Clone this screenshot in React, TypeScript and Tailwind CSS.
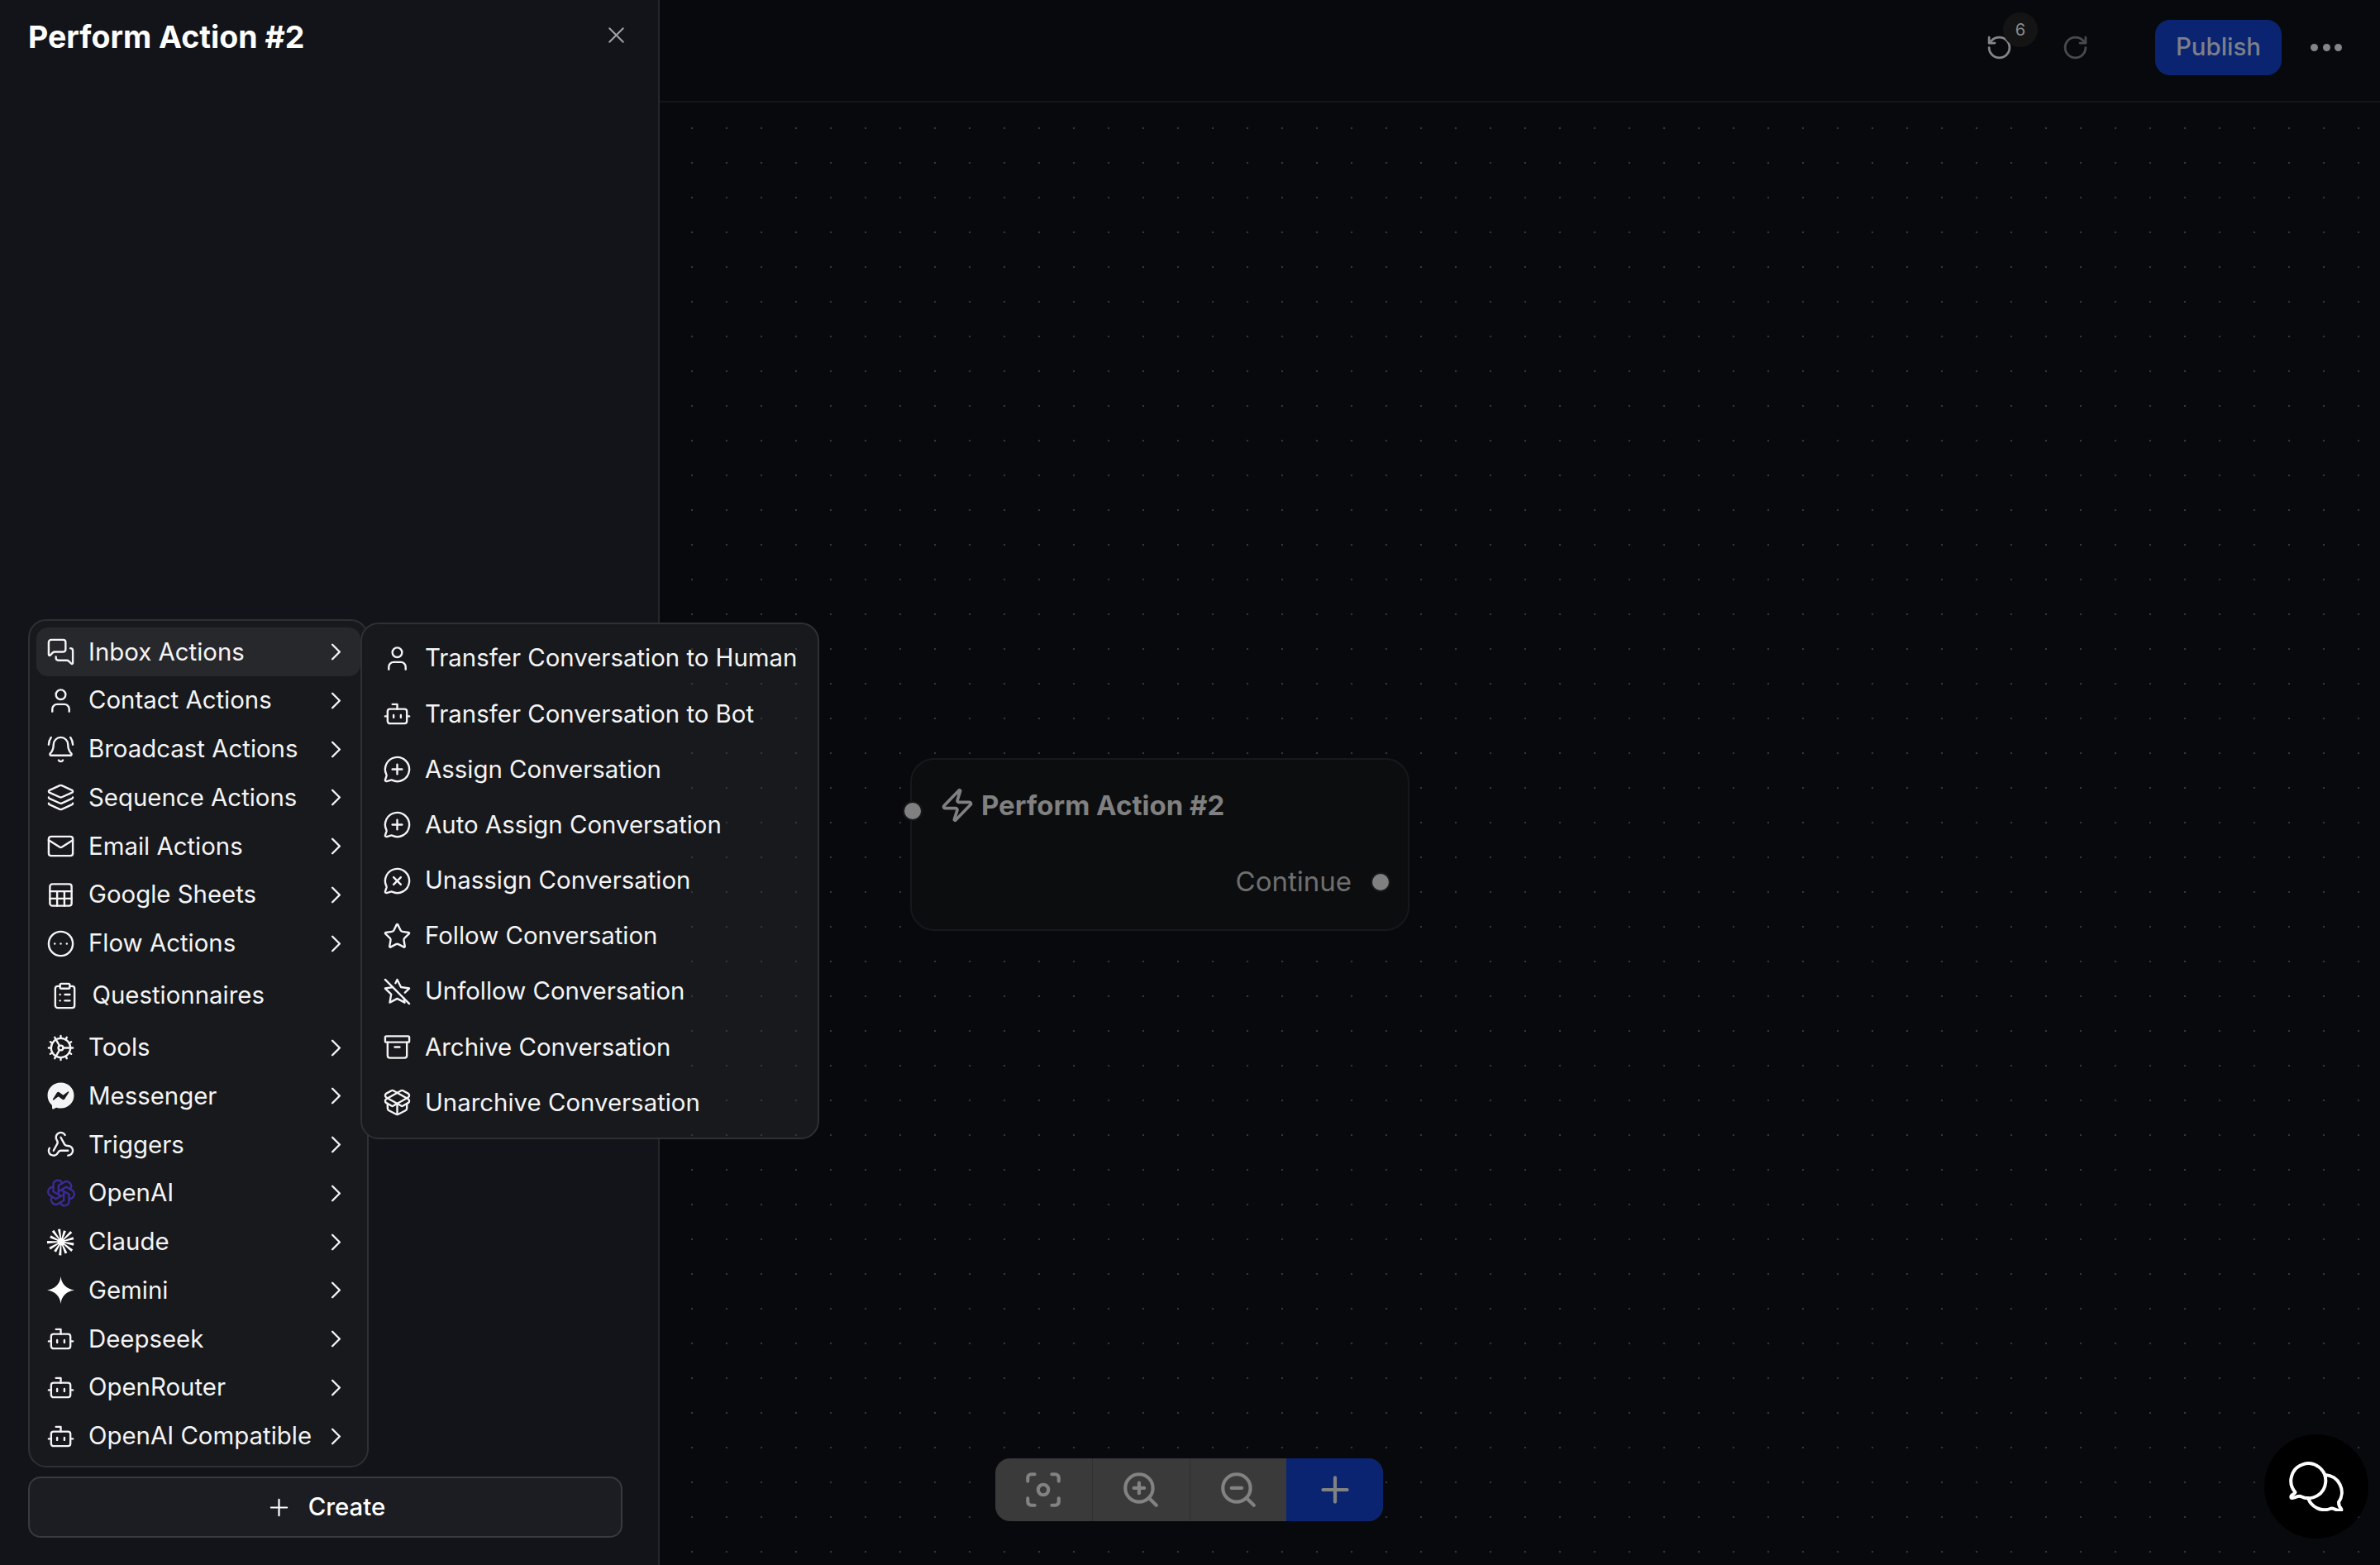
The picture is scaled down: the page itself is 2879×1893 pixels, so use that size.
import React from "react";
import {
  MessagesSquare, User, BellRing, Layers, Mail, Sheet, CircleEllipsis, ClipboardList, ChevronRight,
  Webhook, Bot, MessageCirclePlus, MessageCircleX, Star, StarOff, Archive, PackageOpen, Zap, X,
  RotateCcw, RotateCw, Focus, ZoomIn, ZoomOut, Plus, Cog,
} from "lucide-react";
import { TbBrandOpenai } from "react-icons/tb";
import { FaFacebookMessenger } from "react-icons/fa";

const SW = 1.65;

function ClaudeIcon() {
  const count = 13;
  const rays = Array.from({ length: count }, (_, i) => (i * Math.PI * 2) / count + 0.2);
  const lengths = [15.5, 17, 15, 16.5, 14, 16, 17, 14.5, 16.5, 15.5, 14, 17, 15.5];
  return (
    <svg width="34" height="34" viewBox="0 0 34 34" fill="#fff" className="overflow-visible">
      <circle cx="17" cy="17" r="4.5" />
      {rays.map((a, i) => {
        const r = lengths[i];
        const nx = -Math.sin(a);
        const ny = Math.cos(a);
        const ox = 17 + r * Math.cos(a);
        const oy = 17 + r * Math.sin(a);
        const points = [
          `${17 + 0.5 * nx},${17 + 0.5 * ny}`,
          `${ox + 1.6 * nx},${oy + 1.6 * ny}`,
          `${ox - 1.6 * nx},${oy - 1.6 * ny}`,
          `${17 - 0.5 * nx},${17 - 0.5 * ny}`,
        ].join(" ");
        return <polygon key={i} points={points} />;
      })}
    </svg>
  );
}

function GeminiIcon() {
  return (
    <svg width="33" height="33" viewBox="0 0 33 33" fill="#fff">
      <path d="M16.5 0 C17.5 9 23 15 33 16.5 C23 18 17.5 24 16.5 33 C15.5 24 10 18 0 16.5 C10 15 15.5 9 16.5 0 Z" />
    </svg>
  );
}

type Item = { label: string; icon: React.ReactNode; chevron?: boolean };

const ic = (I: React.ComponentType<any>) => <I size={35} strokeWidth={SW} />;

const mainItems: Item[] = [
  { label: "Inbox Actions", icon: ic(MessagesSquare) },
  { label: "Contact Actions", icon: ic(User) },
  { label: "Broadcast Actions", icon: ic(BellRing) },
  { label: "Sequence Actions", icon: ic(Layers) },
  { label: "Email Actions", icon: ic(Mail) },
  { label: "Google Sheets", icon: ic(Sheet) },
  { label: "Flow Actions", icon: ic(CircleEllipsis) },
];

const lowerItems: Item[] = [
  { label: "Tools", icon: ic(Cog) },
  { label: "Messenger", icon: <FaFacebookMessenger size={33} /> },
  { label: "Triggers", icon: ic(Webhook) },
  { label: "OpenAI", icon: <TbBrandOpenai size={38} strokeWidth={1.5} color="#3b2a96" /> },
  { label: "Claude", icon: <ClaudeIcon /> },
  { label: "Gemini", icon: <GeminiIcon /> },
  { label: "Deepseek", icon: ic(Bot) },
  { label: "OpenRouter", icon: ic(Bot) },
  { label: "OpenAI Compatible", icon: ic(Bot) },
];

const subItems: Item[] = [
  { label: "Transfer Conversation to Human", icon: ic(User) },
  { label: "Transfer Conversation to Bot", icon: ic(Bot) },
  { label: "Assign Conversation", icon: ic(MessageCirclePlus) },
  { label: "Auto Assign Conversation", icon: ic(MessageCirclePlus) },
  { label: "Unassign Conversation", icon: ic(MessageCircleX) },
  { label: "Follow Conversation", icon: ic(Star) },
  { label: "Unfollow Conversation", icon: ic(StarOff) },
  { label: "Archive Conversation", icon: ic(Archive) },
  { label: "Unarchive Conversation", icon: ic(PackageOpen) },
];

function MenuRow({ item, active }: { item: Item; active?: boolean }) {
  return (
    <div
      className={`flex h-[58.75px] items-center justify-between rounded-[14px] pl-[13px] pr-[12px] ${active ? "bg-[#27282b]" : ""}`}
    >
      <div className="flex items-center gap-[17px]">
        <span className="flex h-[33px] w-[33px] shrink-0 items-center justify-center [&>svg]:shrink-0">{item.icon}</span>
        <span>{item.label}</span>
      </div>
      <ChevronRight size={35} strokeWidth={SW} />
    </div>
  );
}

function ChatIcon() {
  return (
    <svg width="66" height="60" viewBox="0 0 66 60" fill="none" stroke="#fff" strokeWidth="4" strokeLinejoin="round" strokeLinecap="round">
      <path d="M7.5 37 A21 21 0 1 1 14 42 C11 41 6 44 3.5 44 C2 44 2 42 3 41 C5 39 7 39 7.5 37 Z" />
      <path d="M44 16 A21 21 0 0 1 60 49 C60 52 61 55 63 57 C64 59 63 59 61 59 C57 59 54 56 51 56.5 A21 21 0 0 1 23 44" />
    </svg>
  );
}

export default function App() {
  return (
    <div className="flex h-[1893px] w-[2879px] overflow-hidden bg-[#07090d] font-['Inter',sans-serif] text-[29.4px] text-[#f4f4f5]">
      {/* Sidebar */}
      <aside className="relative flex w-[798px] shrink-0 flex-col border-r-2 border-[#25272c] bg-[#12141a] pl-[34px] pr-[44px]">
        <div className="flex items-center justify-between pt-[21px]">
          <h1 className="text-[37.5px] font-bold leading-[48px] text-white">Perform Action #2</h1>
          <X size={33} strokeWidth={1.5} className="mb-[6px] mr-[-10px] text-[#a0a0a5]" />
        </div>

        <div className="mt-auto flex flex-col gap-[11px] pb-[33px]">
          <div className="relative w-[412px] rounded-[22px] border-2 border-[#2e3033] bg-[#18191c] px-[8px] pb-[6.5px] pt-[8.5px]">
            {mainItems.map((it, i) => (
              <MenuRow key={it.label} item={it} active={i === 0} />
            ))}
            <div className="flex h-[67.2px] items-center gap-[15.5px] pl-[17px]">
              <ClipboardList size={35} strokeWidth={SW} />
              <span>Questionnaires</span>
            </div>
            {lowerItems.map((it) => (
              <MenuRow key={it.label} item={it} />
            ))}

            {/* Submenu */}
            <div className="absolute left-[400px] top-[2px] w-[555px] rounded-[22px] border-2 border-[#2e3033] bg-[#18191c] p-[8px]">
              {subItems.map((it) => (
                <div key={it.label} className="flex h-[67.2px] items-center gap-[17px] pl-[18px]">
                  <span className="flex h-[33px] w-[33px] shrink-0 items-center justify-center [&>svg]:shrink-0">{it.icon}</span>
                  <span className="whitespace-nowrap">{it.label}</span>
                </div>
              ))}
            </div>
          </div>

          <button className="flex h-[74px] w-[719px] items-center justify-center gap-[19px] rounded-[15px] border-2 border-[#383a40] bg-[#1b1d23] text-[29.4px] font-medium text-white">
            <Plus size={33} strokeWidth={1.6} />
            <span>Create</span>
          </button>
        </div>
      </aside>

      {/* Canvas */}
      <main className="relative flex min-w-0 flex-1 flex-col">
        <header className="flex h-[124px] shrink-0 items-center border-b-2 border-[#14161a] pb-[8px] pl-[1604px]">
          <div className="relative flex items-center">
            <RotateCcw size={33} strokeWidth={2} className="text-[#858585]" />
            <span className="absolute left-[21px] top-[-26px] flex h-[42px] w-[42px] items-center justify-center rounded-full bg-[#141415] text-[20px] text-[#8a8a8a]">
              6
            </span>
            <RotateCw size={33} strokeWidth={2} className="ml-[59px] text-[#4a4a4a]" />
          </div>
          <button className="ml-[80px] flex h-[67px] w-[153px] items-center justify-center rounded-[18px] bg-[#0a2472] text-[29.4px] font-medium text-[#7d8089]">
            Publish
          </button>
          <div className="ml-[35px] flex items-center gap-[5.5px]">
            <span className="h-[9px] w-[9px] rounded-full bg-[#858585]" />
            <span className="h-[9px] w-[9px] rounded-full bg-[#858585]" />
            <span className="h-[9px] w-[9px] rounded-full bg-[#858585]" />
          </div>
        </header>

        <div className="relative flex-1 bg-[radial-gradient(circle_at_39px_31px,#34363b_1px,transparent_1.6px)] bg-[size:42px_42px]">
          {/* Node on the free canvas */}
          <div className="absolute left-[303px] top-[793px] h-[209px] w-[604px] rounded-[29px] border-2 border-[#17181b] bg-[#0c0d0f]">
            <span className="absolute left-[-11px] top-[50px] h-[24px] w-[24px] rounded-full border-2 border-[#17181b] bg-[#808080]" />
            <span className="absolute right-[21px] top-[136px] h-[24px] w-[24px] rounded-full border-2 border-[#17181b] bg-[#808080]" />
            <div className="flex items-center gap-[7px] pl-[33px] pt-[33px] text-[#808080]">
              <Zap size={44} strokeWidth={2} />
              <span className="text-[33px] font-bold leading-[44px]">Perform Action #2</span>
            </div>
            <div className="mt-[48px] pr-[68px] text-right text-[33px] leading-[44px] text-[#6f6f6f]">Continue</div>
          </div>

          {/* Zoom toolbar */}
          <div className="absolute left-[406px] top-[1640px] flex h-[76px] w-[469px] overflow-hidden rounded-[18px] bg-[#3a3a3a] text-[#828282]">
            <div className="flex flex-1 items-center justify-center border-r border-[#303030]"><Focus size={50} strokeWidth={2} /></div>
            <div className="flex flex-1 items-center justify-center border-r border-[#303030]"><ZoomIn size={50} strokeWidth={2} /></div>
            <div className="flex flex-1 items-center justify-center"><ZoomOut size={50} strokeWidth={2} /></div>
            <div className="flex flex-1 items-center justify-center bg-[#0a2472]"><Plus size={50} strokeWidth={2} /></div>
          </div>

          {/* Chat launcher */}
          <div className="absolute left-[1941px] top-[1611px] flex h-[126px] w-[126px] items-center justify-center rounded-full bg-black">
            <ChatIcon />
          </div>
        </div>
      </main>
    </div>
  );
}
